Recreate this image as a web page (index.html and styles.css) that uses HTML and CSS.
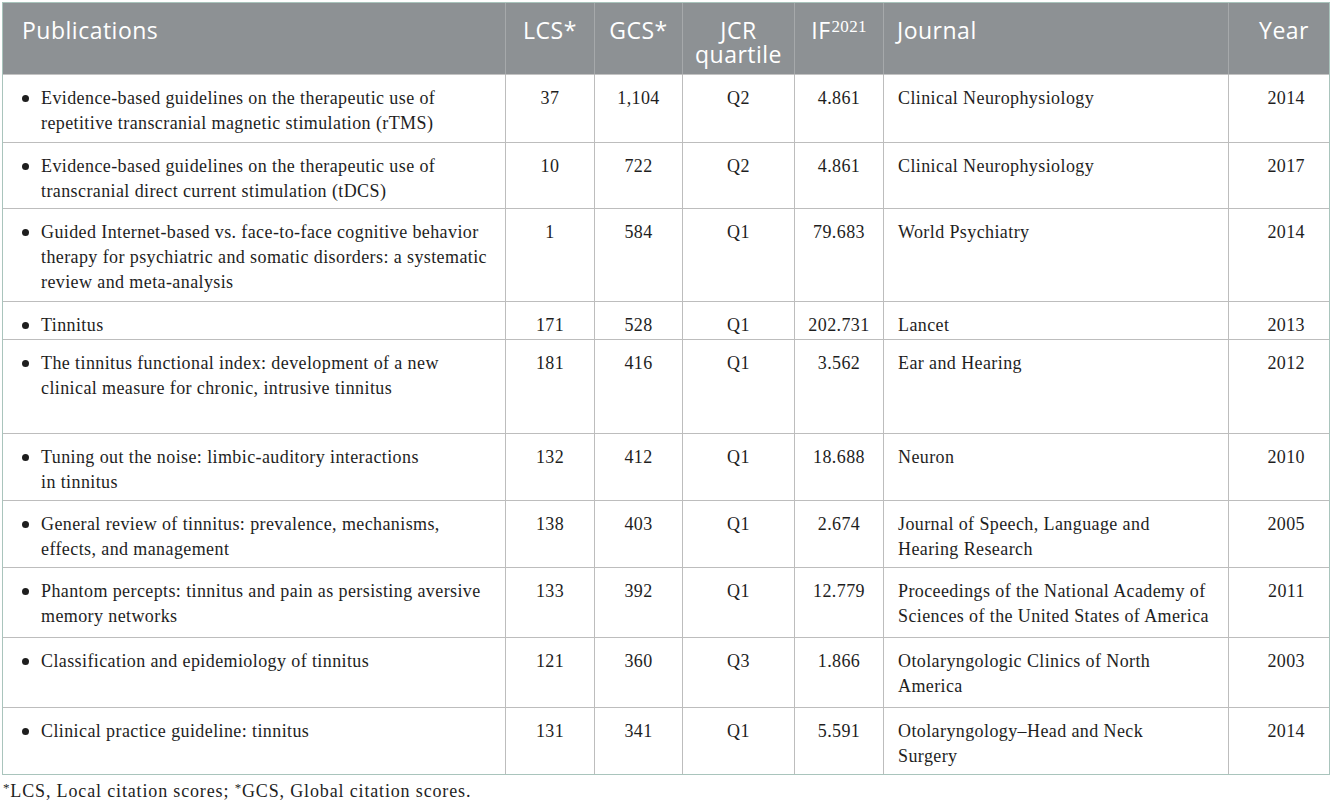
FILE: index.html
```html
<!DOCTYPE html>
<html lang="en">
<head>
<meta charset="utf-8">
<title>Top cited publications</title>
<link rel="stylesheet" href="styles.css">
</head>
<body>
<div class="wrap">
<table class="pubs">
  <thead>
    <tr>
      <th class="c-pub left">Publications</th>
      <th class="c-lcs">LCS*</th>
      <th class="c-gcs">GCS*</th>
      <th class="c-jcr">JCR<br>quartile</th>
      <th class="c-if">IF<sup>2021</sup></th>
      <th class="c-jour left">Journal</th>
      <th class="c-year right">Year</th>
    </tr>
  </thead>
  <tbody>
    <tr class="h-a">
      <td class="left"><div class="item"><span class="dot"></span><span>Evidence-based guidelines on the therapeutic use of<br>repetitive transcranial magnetic stimulation (rTMS)</span></div></td>
      <td>37</td><td>1,104</td><td>Q2</td><td>4.861</td>
      <td class="left">Clinical Neurophysiology</td><td class="right">2014</td>
    </tr>
    <tr class="h-b">
      <td class="left"><div class="item"><span class="dot"></span><span>Evidence-based guidelines on the therapeutic use of<br>transcranial direct current stimulation (tDCS)</span></div></td>
      <td>10</td><td>722</td><td>Q2</td><td>4.861</td>
      <td class="left">Clinical Neurophysiology</td><td class="right">2017</td>
    </tr>
    <tr class="h-c">
      <td class="left"><div class="item"><span class="dot"></span><span>Guided Internet-based vs. face-to-face cognitive behavior<br>therapy for psychiatric and somatic disorders: a systematic<br>review and meta-analysis</span></div></td>
      <td>1</td><td>584</td><td>Q1</td><td>79.683</td>
      <td class="left">World Psychiatry</td><td class="right">2014</td>
    </tr>
    <tr class="h-d">
      <td class="left"><div class="item"><span class="dot"></span><span>Tinnitus</span></div></td>
      <td>171</td><td>528</td><td>Q1</td><td>202.731</td>
      <td class="left">Lancet</td><td class="right">2013</td>
    </tr>
    <tr class="h-e">
      <td class="left"><div class="item"><span class="dot"></span><span>The tinnitus functional index: development of a new<br>clinical measure for chronic, intrusive tinnitus</span></div></td>
      <td>181</td><td>416</td><td>Q1</td><td>3.562</td>
      <td class="left">Ear and Hearing</td><td class="right">2012</td>
    </tr>
    <tr class="h-f">
      <td class="left"><div class="item"><span class="dot"></span><span>Tuning out the noise: limbic-auditory interactions<br>in tinnitus</span></div></td>
      <td>132</td><td>412</td><td>Q1</td><td>18.688</td>
      <td class="left">Neuron</td><td class="right">2010</td>
    </tr>
    <tr class="h-f">
      <td class="left"><div class="item"><span class="dot"></span><span>General review of tinnitus: prevalence, mechanisms,<br>effects, and management</span></div></td>
      <td>138</td><td>403</td><td>Q1</td><td>2.674</td>
      <td class="left">Journal of Speech, Language and<br>Hearing Research</td><td class="right">2005</td>
    </tr>
    <tr class="h-g">
      <td class="left"><div class="item"><span class="dot"></span><span>Phantom percepts: tinnitus and pain as persisting aversive<br>memory networks</span></div></td>
      <td>133</td><td>392</td><td>Q1</td><td>12.779</td>
      <td class="left">Proceedings of the National Academy of<br>Sciences of the United States of America</td><td class="right">2011</td>
    </tr>
    <tr class="h-g">
      <td class="left"><div class="item"><span class="dot"></span><span>Classification and epidemiology of tinnitus</span></div></td>
      <td>121</td><td>360</td><td>Q3</td><td>1.866</td>
      <td class="left">Otolaryngologic Clinics of North<br>America</td><td class="right">2003</td>
    </tr>
    <tr class="h-b">
      <td class="left"><div class="item"><span class="dot"></span><span>Clinical practice guideline: tinnitus</span></div></td>
      <td>131</td><td>341</td><td>Q1</td><td>5.591</td>
      <td class="left">Otolaryngology&ndash;Head and Neck<br>Surgery</td><td class="right">2014</td>
    </tr>
  </tbody>
</table>
<p class="note"><sup>*</sup>LCS, Local citation scores; <sup>*</sup>GCS, Global citation scores.</p>
</div>
</body>
</html>
```

FILE: styles.css
```css
html, body {
  margin: 0;
  padding: 0;
  background: #ffffff;
}

.wrap {
  padding: 2px 0 0 2px;
}

.pubs {
  border-collapse: separate;
  border-spacing: 0;
  table-layout: fixed;
  width: 1328px;
  border: 1px solid #a9c4bc;
  font-family: "Liberation Serif", "Times New Roman", serif;
  font-size: 18px;
  letter-spacing: 0.4px;
  color: #1e1e1e;
}

.pubs th,
.pubs td {
  box-sizing: border-box;
  border-right: 1px solid #bdbdbd;
  border-bottom: 1px solid #bdbdbd;
  vertical-align: top;
  text-align: center;
  line-height: 25px;
  padding: 11px 4px 0 4px;
}

.pubs th:last-child,
.pubs td:last-child {
  border-right: none;
}

.pubs tbody tr:last-child td {
  border-bottom: none;
}

.pubs thead th {
  background: #8d9194;
  color: #ffffff;
  font-family: "Open Sans", "Liberation Sans", sans-serif;
  font-weight: 400;
  font-size: 23px;
  letter-spacing: 0.5px;
  line-height: 24px;
  padding-top: 15px;
  height: 72px;
  border-right-color: #a6a9ab;
  border-bottom-color: #c3c3c3;
}

.pubs thead th sup {
  font-family: "Liberation Serif", "Times New Roman", serif;
  font-size: 17px;
  letter-spacing: 0.3px;
  line-height: 0;
  vertical-align: 7px;
  margin-left: 1px;
}

.c-pub { width: 503px; }
.c-lcs { width: 89px; }
.c-gcs { width: 88px; }
.c-jcr { width: 112px; }
.c-if { width: 89px; }
.c-jour { width: 345px; }
.c-year { width: 100px; }

.pubs .left { text-align: left; }
.pubs .right { text-align: right; padding-right: 24px; }

.pubs th.c-pub { padding-left: 19px; }
.pubs th.c-jour { padding-left: 13px; }
.pubs th.c-year { padding-right: 20px; }

.pubs td.left { padding-left: 14px; }
.pubs td.left:first-child { padding-left: 19px; padding-right: 4px; }

.item {
  display: flex;
  align-items: flex-start;
}

.dot {
  flex: 0 0 auto;
  width: 7px;
  height: 7px;
  border-radius: 50%;
  background: #1e1e1e;
  margin: 9px 12px 0 0;
}

.h-a { height: 68px; }
.h-b { height: 66px; }
.h-c { height: 93px; }
.h-d { height: 38px; }
.h-e { height: 94px; }
.h-f { height: 67px; }
.h-g { height: 70px; }

.note {
  margin: 4px 0 0 1px;
  font-family: "Liberation Serif", "Times New Roman", serif;
  font-size: 18px;
  letter-spacing: 0.85px;
  line-height: 25px;
  color: #1e1e1e;
}

.note sup {
  font-size: 13px;
  vertical-align: 5px;
  line-height: 0;
}
```
